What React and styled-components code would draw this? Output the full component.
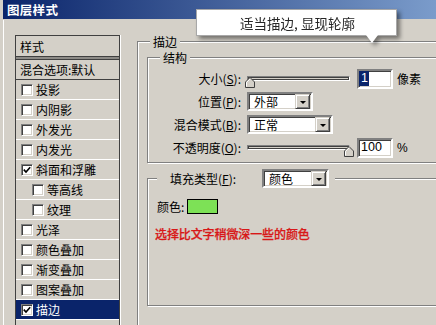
import React from "react";
import styled, { createGlobalStyle } from "styled-components";

const GlobalStyle = createGlobalStyle`
  html, body {
    margin: 0;
    padding: 0;
    background: #d4d0c8;
  }
  body {
    font-family: "Noto Sans CJK SC", "Liberation Sans", sans-serif;
    font-size: 12px;
    color: #000;
  }
`;

const Window = styled.div`
  position: relative;
  width: 436px;
  height: 325px;
  overflow: hidden;
  background: #d4d0c8;
`;

const TitleBar = styled.div`
  height: 19px;
  margin-left: 3px;
  padding-left: 4px;
  display: flex;
  align-items: center;
  background: linear-gradient(90deg, #0a246a 0px, #a6caf0 600px);
  color: #fff;
  font-weight: bold;
  font-size: 12.5px;
  letter-spacing: 0.3px;
`;

const Body = styled.div`
  display: flex;
  height: 305px;
  margin: 1px 0 0 3px;
  border-left: 1px solid #fff;
`;

const LeftColumn = styled.div`
  padding: 15px 0 0 11px;
`;

const StyleList = styled.div`
  width: 103px;
  height: 300px;
  border: 1px solid #404040;
  box-shadow: 1px 0 0 #fff;
`;

const ListHeader = styled.div`
  height: 20px;
  padding-left: 4px;
  display: flex;
  align-items: center;
`;

const HeaderDivider = styled.div`
  height: 2px;
  border-top: 1px solid #404040;
  border-bottom: 1px solid #404040;
  background: #8c8a86;
`;

const BlendRow = styled.div`
  height: 19px;
  padding-left: 4px;
  display: flex;
  align-items: center;
  border-bottom: 1px solid #404040;
`;

const ListItem = styled.div`
  height: 19px;
  display: flex;
  align-items: center;
  padding-left: ${(p) => (p.$indent ? 16 : 5)}px;
  border-bottom: 1px solid #fff;
  background: ${(p) => (p.$selected ? "#0a246a" : "transparent")};
  color: ${(p) => (p.$selected ? "#fff" : "#000")};
`;

const CheckBox = styled.span`
  width: 10px;
  height: 10px;
  margin-right: 3px;
  background: #fff;
  border-style: solid;
  border-width: 1px;
  border-color: #808080 #fff #fff #808080;
  box-shadow: inset 1px 1px 0 #404040, inset -1px -1px 0 #d4d0c8;
  display: flex;
  align-items: center;
  justify-content: center;

  svg {
    display: block;
  }
`;

const RightColumn = styled.div`
  padding: 21px 0 0 17px;
`;

const Group = styled.div`
  width: ${(p) => p.$w}px;
  height: ${(p) => (p.$h ? `${p.$h}px` : "auto")};
  margin: ${(p) => p.$mt || 0}px 0 0 ${(p) => p.$ml || 0}px;
  border: 1px solid #808080;
  box-shadow: inset 1px 1px 0 #fff, 1px 1px 0 #fff;
  padding-bottom: ${(p) => p.$pb || 0}px;
`;

const Legend = styled.div`
  width: fit-content;
  height: 13px;
  line-height: 13px;
  margin: -7px 0 0 ${(p) => p.$ml}px;
  padding: 0 3px;
  background: #d4d0c8;
`;

const FieldGrid = styled.div`
  display: grid;
  grid-template-columns: 93px auto;
  grid-auto-rows: 23px;
  column-gap: 6px;
  align-items: center;
  margin-top: 3px;
`;

const FieldLabel = styled.label`
  text-align: right;
  white-space: nowrap;
`;

const Controls = styled.div`
  display: flex;
  align-items: center;
`;

const Slider = styled.div`
  position: relative;
  width: 103px;
  height: 20px;
`;

const Track = styled.div`
  height: 3px;
  margin-top: 7px;
  background: #d4d0c8;
  border-style: solid;
  border-width: 1px;
  border-color: #808080 #fff #fff #808080;
  box-shadow: inset 1px 1px 0 #404040, inset -1px -1px 0 #404040;
`;

const Thumb = styled.svg`
  position: absolute;
  top: 8px;
  ${(p) => (p.$end ? "right: -4px;" : "left: -2px;")}
`;

const TextBox = styled.div`
  width: 32px;
  height: 16px;
  margin-left: 7px;
  background: #fff;
  border-style: solid;
  border-width: 2px;
  border-color: #808080 #fff #fff #808080;
  box-shadow: inset 1px 1px 0 #404040, inset -1px -1px 0 #d4d0c8;
  display: flex;
  align-items: center;
  font-family: "Liberation Sans", sans-serif;
  font-size: 12.5px;
`;

const TextValue = styled.span`
  padding: 0 1px 0 2px;
  line-height: 15px;
  background: ${(p) => (p.$selected ? "#0a246a" : "transparent")};
  color: ${(p) => (p.$selected ? "#fff" : "#000")};
`;

const Unit = styled.span`
  margin-left: 4px;
  font-family: ${(p) => (p.$latin ? '"Liberation Sans", sans-serif' : "inherit")};
`;

const Select = styled.div`
  width: ${(p) => p.$w - 4}px;
  height: 15px;
  background: #fff;
  border-style: solid;
  border-width: 2px;
  border-color: #808080 #fff #fff #808080;
  box-shadow: inset 1px 1px 0 #404040, inset -1px -1px 0 #d4d0c8;
  display: flex;
  align-items: center;
  justify-content: space-between;
`;

const SelectText = styled.span`
  padding-left: 5px;
  line-height: 15px;
`;

const DropButton = styled.span`
  width: 13px;
  height: 13px;
  margin-right: 1px;
  background: #d4d0c8;
  border-style: solid;
  border-width: 1px;
  border-color: #d4d0c8 #404040 #404040 #d4d0c8;
  box-shadow: inset 1px 1px 0 #fff, inset -1px -1px 0 #808080;
  display: flex;
  align-items: center;
  justify-content: center;

  &::after {
    content: "";
    border-left: 3px solid transparent;
    border-right: 3px solid transparent;
    border-top: 3px solid #000;
    margin-top: 1px;
  }
`;

const FillLegend = styled.div`
  display: flex;
  align-items: center;
  width: fit-content;
  height: 19px;
  margin: -10px 0 0 9px;
  padding: 0 6px 0 13px;
  background: #d4d0c8;
`;

const FillLabel = styled.span`
  width: 92px;
  white-space: nowrap;
`;

const ColorRow = styled.div`
  display: flex;
  align-items: center;
  margin: 10px 0 0 9px;
`;

const Swatch = styled.span`
  width: 29px;
  height: 13px;
  margin-left: 3px;
  border: 1px solid #000;
  background: ${(p) => p.$color};
`;

const Hint = styled.div`
  margin: 12px 0 0 7px;
  line-height: 14px;
  color: #d81818;
  font-weight: 500;
  letter-spacing: -0.1px;
  -webkit-text-stroke: 0.25px #d81818;
`;

const Bubble = styled.div`
  position: absolute;
  left: 196px;
  top: 9px;
  width: 201px;
  height: 25px;
  filter: drop-shadow(3px 3px 2px rgba(0, 0, 0, 0.45));

  &::after {
    content: "";
    position: absolute;
    left: 170px;
    top: 26px;
    width: 12px;
    height: 8px;
    background: #fff;
    clip-path: polygon(0 0, 100% 0, 50% 100%);
  }
`;

const BubbleBox = styled.div`
  height: 25px;
  padding-left: 2px;
  background: #fff;
  border: 1px solid #a8a8a8;
  display: flex;
  align-items: center;
  justify-content: center;
  font-size: 13.5px;
  color: #262626;
`;

const Check = () => (
  <svg width="8" height="8" viewBox="0 0 8 8">
    <polyline points="0.8,3.6 3,6 7.2,1.2" fill="none" stroke="#000" strokeWidth="1.6" />
  </svg>
);

const SliderThumb = ({ end }) => (
  <Thumb $end={end} width="10" height="11" viewBox="0 0 10 11">
    <polygon points="0.5,10.5 0.5,5 5,0.5 9.5,5 9.5,10.5" fill="#d4d0c8" stroke="#404040" />
    <polyline points="1.5,9.5 1.5,5.4 5,1.9" fill="none" stroke="#fff" />
  </Thumb>
);

const items = [
  { name: "投影" },
  { name: "内阴影" },
  { name: "外发光" },
  { name: "内发光" },
  { name: "斜面和浮雕", checked: true },
  { name: "等高线", indent: true },
  { name: "纹理", indent: true },
  { name: "光泽" },
  { name: "颜色叠加" },
  { name: "渐变叠加" },
  { name: "图案叠加" },
  { name: "描边", checked: true, selected: true },
  { name: "" },
];

export default function App() {
  return (
    <>
      <GlobalStyle />
      <Window>
        <TitleBar>图层样式</TitleBar>
        <Body>
          <LeftColumn>
            <StyleList>
              <ListHeader>样式</ListHeader>
              <HeaderDivider />
              <BlendRow>混合选项:默认</BlendRow>
              {items.map((it, i) => (
                <ListItem key={i} $indent={it.indent} $selected={it.selected}>
                  {it.name && <CheckBox>{it.checked && <Check />}</CheckBox>}
                  {it.name}
                </ListItem>
              ))}
            </StyleList>
          </LeftColumn>

          <RightColumn>
            <Group $w={330} $h={300}>
              <Legend $ml={12}>描边</Legend>
              <Group $w={310} $mt={9} $ml={9} $pb={3}>
                <Legend $ml={12}>结构</Legend>
                <FieldGrid>
                  <FieldLabel>大小(<u>S</u>):</FieldLabel>
                  <Controls>
                    <Slider>
                      <Track />
                      <SliderThumb />
                    </Slider>
                    <TextBox>
                      <TextValue $selected>1</TextValue>
                    </TextBox>
                    <Unit>像素</Unit>
                  </Controls>

                  <FieldLabel>位置(<u>P</u>):</FieldLabel>
                  <Controls>
                    <Select $w={66}>
                      <SelectText>外部</SelectText>
                      <DropButton />
                    </Select>
                  </Controls>

                  <FieldLabel>混合模式(<u>B</u>):</FieldLabel>
                  <Controls>
                    <Select $w={86}>
                      <SelectText>正常</SelectText>
                      <DropButton />
                    </Select>
                  </Controls>

                  <FieldLabel>不透明度(<u>O</u>):</FieldLabel>
                  <Controls>
                    <Slider>
                      <Track />
                      <SliderThumb end />
                    </Slider>
                    <TextBox>
                      <TextValue>100</TextValue>
                    </TextBox>
                    <Unit $latin>%</Unit>
                  </Controls>
                </FieldGrid>
              </Group>

              <Group $w={310} $h={126} $mt={15} $ml={9}>
                <FillLegend>
                  <FillLabel>填充类型(<u>F</u>):</FillLabel>
                  <Select $w={67}>
                    <SelectText>颜色</SelectText>
                    <DropButton />
                  </Select>
                </FillLegend>
                <ColorRow>
                  颜色:
                  <Swatch $color="#7de156" />
                </ColorRow>
                <Hint>选择比文字稍微深一些的颜色</Hint>
              </Group>
            </Group>
          </RightColumn>
        </Body>

        <Bubble>
          <BubbleBox>适当描边, 显现轮廓</BubbleBox>
        </Bubble>
      </Window>
    </>
  );
}
